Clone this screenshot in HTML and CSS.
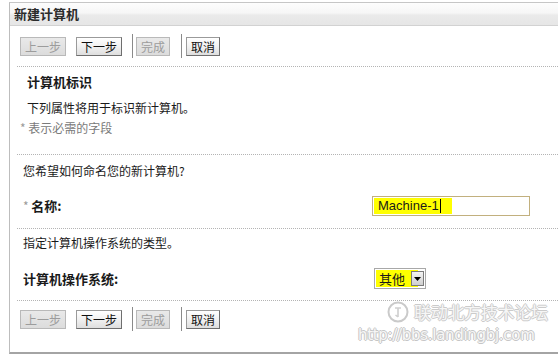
FILE: index.html
```html
<!DOCTYPE html>
<html>
<head>
<meta charset="utf-8">
<link rel="stylesheet" href="styles.css">
</head>
<body>
<div class="window">
  <div class="header"><span class="title">新建计算机</span></div>

  <div class="toolbar">
    <button class="btn w3 disabled b1">上一步</button>
    <button class="btn w3 b2">下一步</button>
    <span class="sep s1"></span>
    <button class="btn w2 disabled b3">完成</button>
    <span class="sep s2"></span>
    <button class="btn w2 b4">取消</button>
  </div>
  <div class="rule r1"></div>

  <div class="sec1">
    <div class="sec-title">计算机标识</div>
    <div class="desc">下列属性将用于标识新计算机。</div>
    <div class="note"><span class="ast">*</span> 表示必需的字段</div>
  </div>
  <div class="rule r2"></div>

  <div class="sec2">
    <div class="question">您希望如何命名您的新计算机?</div>
    <div class="field f-name">
      <div class="label"><span class="ast">*</span> <b>名称:</b></div>
      <div class="textbox"><span class="hl">Machine-1<span class="caret"></span></span></div>
    </div>
  </div>
  <div class="rule r3"></div>

  <div class="sec3">
    <div class="question">指定计算机操作系统的类型。</div>
    <div class="field f-os">
      <div class="label"><b>计算机操作系统:</b></div>
      <div class="select"><span class="sel-text">其他</span><span class="sel-btn"><svg width="7" height="4" viewBox="0 0 7 4"><path d="M0 0H7L3.5 4Z" fill="#000"/></svg></span></div>
    </div>
  </div>
  <div class="rule r4"></div>

  <div class="toolbar bottom">
    <button class="btn w3 disabled b1">上一步</button>
    <button class="btn w3 b2">下一步</button>
    <span class="sep s1"></span>
    <button class="btn w2 disabled b3">完成</button>
    <span class="sep s2"></span>
    <button class="btn w2 b4">取消</button>
  </div>

  <div class="wm-logo"><svg width="22" height="22" viewBox="0 0 22 22"><circle cx="11" cy="11" r="9.5" fill="none" stroke="#cacaca" stroke-width="2"/><path d="M8 7H14M11 7V16M11 16L8.5 14" fill="none" stroke="#cfcfcf" stroke-width="1.6"/></svg></div>
  <div class="wm-name">联动北方技术论坛</div>
  <div class="wm-url">http://bbs.landingbj.com</div>
</div>
</body>
</html>
```

FILE: styles.css
```css
html, body {
  margin: 0;
  padding: 0;
  background: #ffffff;
}

body {
  font-family: "Noto Sans CJK SC", "Liberation Sans", sans-serif;
  font-size: 12px;
  color: #1a1a1a;
}

.window {
  position: relative;
  margin: 2px 0 0 9px;
  height: 349px;
  border-top: 1px solid #c6c6c6;
  border-left: 1px solid #bdbdbd;
  border-bottom: 2px solid #a4a4a4;
  overflow: hidden;
}

.header {
  height: 22px;
  border-bottom: 1px solid #d2d2d2;
  background: linear-gradient(#fdfdfd 0%, #f6f6f6 45%, #eaeaea 55%, #e6e6e6 100%);
  padding-left: 4px;
  display: flex;
  align-items: center;
}

.title {
  font-size: 13px;
  font-weight: bold;
  color: #2b2b2b;
  line-height: 16px;
}

.toolbar {
  margin-top: 8px;
  height: 24px;
  padding-left: 10px;
  display: flex;
  align-items: center;
}

.toolbar.bottom {
  margin-top: 6px;
}

.btn {
  box-sizing: border-box;
  height: 19px;
  padding: 0;
  margin: 0;
  font-family: "Noto Sans CJK SC", sans-serif;
  font-size: 12px;
  line-height: 17px;
  color: #111;
  background: linear-gradient(#ffffff 0%, #f1f1f1 50%, #dedede 100%);
  border: 1px solid #9a9a9a;
  border-right-color: #6e6e6e;
  border-bottom-color: #6e6e6e;
  text-align: center;
}

.btn.disabled {
  color: #9c9c9c;
  background: linear-gradient(#e9e9e9, #dcdcdc);
  border-color: #b9b9b9;
}

.w3 { width: 46px; }
.w2 { width: 34px; }

.b2 { margin-left: 10px; }
.b3 { margin-left: 3px; }
.b4 { margin-left: 4px; }

.sep {
  width: 1px;
  height: 24px;
  background: #8a8a8a;
}
.s1 { margin-left: 10px; }
.s2 { margin-left: 11px; }

.rule {
  margin-left: 7px;
  border-top: 1px dotted #b4b4b4;
  height: 0;
}
.r1 { margin-top: 8px; }
.r2 { margin-top: 18px; }
.r3 { margin-top: 12px; }
.r4 { margin-top: 11px; }

.sec1 {
  padding-left: 17px;
  line-height: 16px;
}

.sec-title {
  margin-top: 7px;
  font-size: 13px;
  font-weight: bold;
}

.desc {
  margin-top: 10px;
}

.note {
  margin-top: 4px;
  margin-left: -7px;
  color: #7a7a7a;
}

.ast {
  color: #9a9a9a;
}

.sec2, .sec3 {
  padding-left: 13px;
  line-height: 16px;
}

.sec2 .question { margin-top: 8px; }
.sec3 .question { margin-top: 6px; }

.field {
  margin-top: 17px;
  display: flex;
  align-items: center;
}

.field b {
  font-size: 13px;
}

.f-name .label { width: 349px; }
.f-os .label { width: 351px; }

.textbox {
  box-sizing: border-box;
  width: 158px;
  height: 20px;
  border: 1px solid #c2b07e;
  background: #fff;
  padding: 1px;
  display: flex;
}

.hl {
  background: #ffff00;
  font-family: "Liberation Sans", Arial, sans-serif;
  font-size: 13px;
  line-height: 16px;
  color: #1a1a1a;
  padding-left: 4px;
  width: 74px;
  display: flex;
  align-items: center;
}

.caret {
  display: inline-block;
  width: 1px;
  height: 14px;
  background: #000;
  margin-left: 1px;
}

.select {
  box-sizing: border-box;
  width: 52px;
  height: 21px;
  border: 1px solid #a8a8a8;
  background: #fff;
  display: flex;
  align-items: center;
  padding: 1px;
  position: relative;
}

.sel-text {
  background: #ffff00;
  height: 17px;
  width: 42px;
  padding-left: 3px;
  box-sizing: border-box;
  font-size: 13px;
  line-height: 17px;
}

.sel-btn {
  position: absolute;
  right: 1px;
  top: 2px;
  box-sizing: border-box;
  width: 13px;
  height: 15px;
  border: 1px solid #7b7b7b;
  background: linear-gradient(#f4f4f4, #cfcfcf);
  display: flex;
  align-items: center;
  justify-content: center;
}

.wm-logo {
  position: absolute;
  left: 377px;
  top: 298px;
}

.wm-name {
  position: absolute;
  left: 404px;
  top: 299px;
  font-size: 17px;
  line-height: 20px;
  color: #f6f6f6;
  letter-spacing: -0.3px;
  text-shadow: 1px 0 #cbcbcb, -1px 0 #cbcbcb, 0 1px #cbcbcb, 0 -1px #cbcbcb;
  white-space: nowrap;
}

.wm-url {
  position: absolute;
  left: 348px;
  top: 322px;
  font-family: "DejaVu Sans", sans-serif;
  font-size: 15px;
  line-height: 20px;
  color: #f6f6f6;
  letter-spacing: -0.3px;
  text-shadow: 1px 0 #c6c6c6, -1px 0 #c6c6c6, 0 1px #c6c6c6, 0 -1px #c6c6c6;
  white-space: nowrap;
}
```
